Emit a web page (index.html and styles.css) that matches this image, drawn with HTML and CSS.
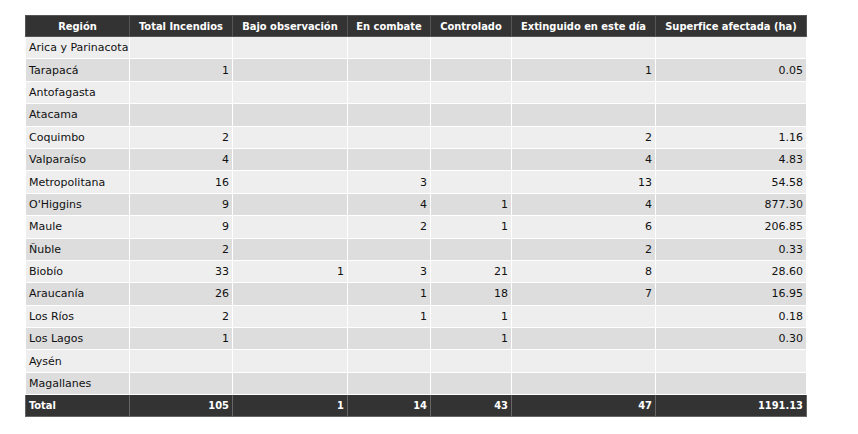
FILE: index.html
```html
<!DOCTYPE html>
<html lang="es">
<head>
<meta charset="utf-8">
<title>Incendios por región</title>
<link rel="stylesheet" href="styles.css">
</head>
<body>
<table class="tbl">
  <colgroup>
    <col class="c1"><col class="c2"><col class="c3"><col class="c4"><col class="c5"><col class="c6"><col class="c7">
  </colgroup>
  <thead>
    <tr><th>Región</th><th>Total Incendios</th><th>Bajo observación</th><th>En combate</th><th>Controlado</th><th>Extinguido en este día</th><th>Superfice afectada (ha)</th></tr>
  </thead>
  <tbody>
    <tr><td>Arica y Parinacota</td><td></td><td></td><td></td><td></td><td></td><td></td></tr>
    <tr><td>Tarapacá</td><td>1</td><td></td><td></td><td></td><td>1</td><td>0.05</td></tr>
    <tr><td>Antofagasta</td><td></td><td></td><td></td><td></td><td></td><td></td></tr>
    <tr><td>Atacama</td><td></td><td></td><td></td><td></td><td></td><td></td></tr>
    <tr><td>Coquimbo</td><td>2</td><td></td><td></td><td></td><td>2</td><td>1.16</td></tr>
    <tr><td>Valparaíso</td><td>4</td><td></td><td></td><td></td><td>4</td><td>4.83</td></tr>
    <tr><td>Metropolitana</td><td>16</td><td></td><td>3</td><td></td><td>13</td><td>54.58</td></tr>
    <tr><td>O'Higgins</td><td>9</td><td></td><td>4</td><td>1</td><td>4</td><td>877.30</td></tr>
    <tr><td>Maule</td><td>9</td><td></td><td>2</td><td>1</td><td>6</td><td>206.85</td></tr>
    <tr><td>Ñuble</td><td>2</td><td></td><td></td><td></td><td>2</td><td>0.33</td></tr>
    <tr><td>Biobío</td><td>33</td><td>1</td><td>3</td><td>21</td><td>8</td><td>28.60</td></tr>
    <tr><td>Araucanía</td><td>26</td><td></td><td>1</td><td>18</td><td>7</td><td>16.95</td></tr>
    <tr><td>Los Ríos</td><td>2</td><td></td><td>1</td><td>1</td><td></td><td>0.18</td></tr>
    <tr><td>Los Lagos</td><td>1</td><td></td><td></td><td>1</td><td></td><td>0.30</td></tr>
    <tr><td>Aysén</td><td></td><td></td><td></td><td></td><td></td><td></td></tr>
    <tr><td>Magallanes</td><td></td><td></td><td></td><td></td><td></td><td></td></tr>
  </tbody>
  <tfoot>
    <tr><td>Total</td><td>105</td><td>1</td><td>14</td><td>43</td><td>47</td><td>1191.13</td></tr>
  </tfoot>
</table>
</body>
</html>
```
FILE: styles.css
```css
html, body {
  margin: 0;
  padding: 0;
  background: #fff;
}
body {
  padding: 15px 0 0 25px;
  font-family: "DejaVu Sans", Verdana, sans-serif;
  font-size: 11px;
  color: #111;
}
.tbl {
  border-collapse: collapse;
  table-layout: fixed;
  width: 781px;
}
.c1 { width: 104px; }
.c2 { width: 103px; }
.c3 { width: 115px; }
.c4 { width: 83px; }
.c5 { width: 81px; }
.c6 { width: 144px; }
.c7 { width: 151px; }
.tbl th {
  background: #333;
  color: #fff;
  font-family: "DejaVu Sans Condensed", "DejaVu Sans", sans-serif;
  font-stretch: condensed;
  font-weight: bold;
  text-align: center;
  height: 20px;
  padding: 0 3px;
  border: 1px solid #555;
  white-space: nowrap;
}
.tbl td {
  height: 21.4px;
  padding: 0 3px;
  border: 1px solid #fff;
  text-align: right;
  white-space: nowrap;
}
.tbl td:first-child {
  text-align: left;
}
.tbl tbody tr:nth-child(odd) td { background: #eee; }
.tbl tbody tr:nth-child(even) td { background: #ddd; }
.tbl tfoot td {
  background: #333;
  color: #fff;
  font-family: "DejaVu Sans Condensed", "DejaVu Sans", sans-serif;
  font-stretch: condensed;
  font-weight: bold;
  border: 1px solid #666;
  height: 21px;
}
```
